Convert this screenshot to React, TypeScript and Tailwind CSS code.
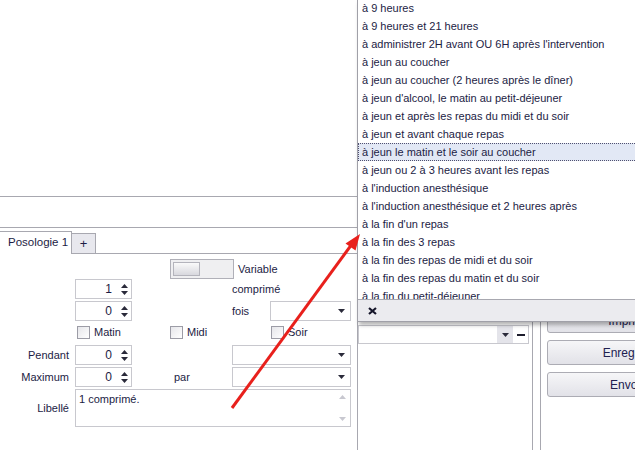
import React from 'react';

const font = "font-['Liberation_Sans',Arial,sans-serif]";

const options = [
  'à 9 heures',
  'à 9 heures et 21 heures',
  "à administrer 2H avant OU 6H après l'intervention",
  'à jeun au coucher',
  'à jeun au coucher (2 heures après le dîner)',
  "à jeun d'alcool, le matin au petit-déjeuner",
  'à jeun et après les repas du midi et du soir',
  'à jeun et avant chaque repas',
  'à jeun le matin et le soir au coucher',
  'à jeun ou 2 à 3 heures avant les repas',
  "à l'induction anesthésique",
  "à l'induction anesthésique et 2 heures après",
  "à la fin d'un repas",
  'à la fin des 3 repas',
  'à la fin des repas de midi et du soir',
  'à la fin des repas du matin et du soir',
  'à la fin du petit-déjeuner',
];

function DownTri({ color = '#2a2a3a' }: { color?: string }) {
  return (
    <svg width="7" height="4" viewBox="0 0 7 4">
      <path d="M0 0 L7 0 L3.5 4 Z" fill={color} />
    </svg>
  );
}

function UpTri({ color = '#2a2a3a' }: { color?: string }) {
  return (
    <svg width="7" height="4" viewBox="0 0 7 4">
      <path d="M0 4 L7 4 L3.5 0 Z" fill={color} />
    </svg>
  );
}

function SpinEdit({ value }: { value: string }) {
  return (
    <div className="w-[57px] h-[20px] border border-[#c8c8ce] bg-white flex items-center shrink-0">
      <span className="flex-1 text-right pr-[7px] text-[12px]">{value}</span>
      <div className="w-[12px] h-full flex flex-col items-center justify-center gap-[3px] pr-[2px]">
        <UpTri />
        <DownTri />
      </div>
    </div>
  );
}

function Combo({ w }: { w: string }) {
  return (
    <div className={`${w} h-[20px] border border-[#c8c8ce] bg-white flex items-center justify-end pr-[5px] shrink-0`}>
      <DownTri />
    </div>
  );
}

function Check({ label }: { label: string }) {
  return (
    <div className="flex items-center gap-[4px]">
      <div className="w-[13px] h-[13px] border border-[#9c9ca6] bg-gradient-to-br from-[#e6e6ea] to-white" />
      <span>{label}</span>
    </div>
  );
}

function Button({ label }: { label: string }) {
  return (
    <div className="w-[170px] h-[25px] shrink-0 rounded-[3px] border border-[#acacb4] bg-gradient-to-b from-[#f6f6f8] to-[#e2e2e8] flex items-center justify-center text-[12px] text-[#202050]">
      {label}
    </div>
  );
}

export default function App() {
  return (
    <div className={`relative w-[635px] h-[450px] overflow-hidden bg-white text-[11px] text-[#1c1c44] ${font}`}>
      <div className="flex h-full">
        {/* Left panel */}
        <div className="w-[358px] shrink-0 flex flex-col border-r border-[#a8a8b0]">
          <div className="h-[197px] shrink-0 border-b border-[#a8a8b0]" />
          <div className="h-[31px] shrink-0 border-b border-[#a8a8b0]" />
          {/* Tabs */}
          <div className="h-[26px] shrink-0 flex items-end border-b border-[#a8a8b0]">
            <div className="h-[23px] w-[72px] border-r border-t border-[#a8a8b0] bg-white flex items-center pl-[8px] text-[11.5px] -mb-px">
              Posologie 1
            </div>
            <div className="h-[20px] w-[24px] border-r border-t border-[#a8a8b0] bg-[#e8e8ee] flex items-center justify-center text-[13px]">
              +
            </div>
          </div>
          {/* Form */}
          <div className="flex flex-col pt-[5px]">
            <div className="h-[20px] flex items-center">
              <div className="ml-[170px] w-[64px] h-[20px] border border-[#b0b0b8] bg-[#efeff1] p-[2px]">
                <div className="w-[27px] h-full border border-[#b4b4bc] bg-gradient-to-b from-[#fafafa] to-[#d8d8de]" />
              </div>
              <span className="ml-[4px]">Variable</span>
            </div>
            <div className="h-[20px] flex items-center">
              <div className="ml-[75px]">
                <SpinEdit value="1" />
              </div>
              <span className="ml-[100px]">comprimé</span>
            </div>
            <div className="h-[20px] mt-[2px] flex items-center">
              <div className="ml-[75px]">
                <SpinEdit value="0" />
              </div>
              <span className="ml-[100px] w-[38px]">fois</span>
              <Combo w="w-[81px]" />
            </div>
            <div className="h-[22px] flex items-center">
              <div className="ml-[77px] w-[93px]">
                <Check label="Matin" />
              </div>
              <div className="w-[101px]">
                <Check label="Midi" />
              </div>
              <Check label="Soir" />
            </div>
            <div className="h-[20px] mt-[2px] flex items-center">
              <span className="w-[75px] text-right pr-[6px]">Pendant</span>
              <SpinEdit value="0" />
              <div className="w-[100px]" />
              <Combo w="w-[119px]" />
            </div>
            <div className="h-[20px] mt-[2px] flex items-center">
              <span className="w-[75px] text-right pr-[6px]">Maximum</span>
              <SpinEdit value="0" />
              <span className="w-[100px] pl-[42px]">par</span>
              <Combo w="w-[119px]" />
            </div>
            <div className="h-[38px] mt-[2px] flex items-center">
              <span className="w-[75px] text-right pr-[6px]">Libellé</span>
              <div className="w-[276px] h-full border border-[#c8c8ce] bg-white flex">
                <span className="flex-1 pl-[3px] pt-[1px]">1 comprimé.</span>
                <div className="w-[16px] h-full flex flex-col items-center justify-between py-[5px]">
                  <UpTri color="#c8c8d0" />
                  <DownTri color="#c8c8d0" />
                </div>
              </div>
            </div>
          </div>
        </div>

        {/* Middle column */}
        <div className="w-[175px] shrink-0 border-r border-[#a8a8b0] pt-[325px]">
          <div className="w-[171px] h-[19px] border border-[#c8c8ce] bg-white flex">
            <div className="flex-1" />
            <div className="w-[16px] h-full bg-[#e4e4ea] flex items-center justify-center">
              <DownTri />
            </div>
            <div className="w-[15px] h-full flex items-center justify-center">
              <div className="w-[8px] h-[2px] bg-[#1c1c2c]" />
            </div>
          </div>
        </div>

        {/* Right panel */}
        <div className="flex-1 ml-[7px] border-l border-[#a8a8b0] pl-[6px] pt-[308px] flex flex-col gap-[7px]">
          <Button label="Imprimer" />
          <Button label="Enregistrer" />
          <Button label="Envoyer" />
        </div>
      </div>

      {/* Dropdown list */}
      <div className="absolute left-[357px] top-0 w-[290px] h-[322px] bg-white border-l border-b border-[#a0a0a8] shadow-[2px_3px_4px_rgba(0,0,0,0.3)] flex flex-col">
        <div className="h-[299px] overflow-hidden">
          <div className="-mt-[1px] flex flex-col">
            {options.map((o, i) => (
              <div
                key={o}
                className={
                  i === 8
                    ? 'h-[18px] shrink-0 flex items-center pl-[3px] bg-[#e2e8f5] border border-dotted border-[#505070] whitespace-nowrap'
                    : 'h-[18px] shrink-0 flex items-center pl-[4px] whitespace-nowrap'
                }
              >
                {o}
              </div>
            ))}
          </div>
        </div>
        <div className="flex-1 border-t border-[#a8a8b0] bg-[#ebebef] flex items-center pl-[10px]">
          <svg width="9" height="8" viewBox="0 0 9 8">
            <path d="M1 1 L8 7 M8 1 L1 7" stroke="#15152a" strokeWidth="2.2" />
          </svg>
        </div>
      </div>

      {/* Red arrow annotation */}
      <svg className="absolute inset-0 pointer-events-none" width="635" height="450">
        <line x1="232" y1="408" x2="352" y2="244" stroke="#e8201c" strokeWidth="3" />
        <polygon points="360,234 355.5,250.5 345.5,243.5" fill="#e8201c" />
      </svg>
    </div>
  );
}
